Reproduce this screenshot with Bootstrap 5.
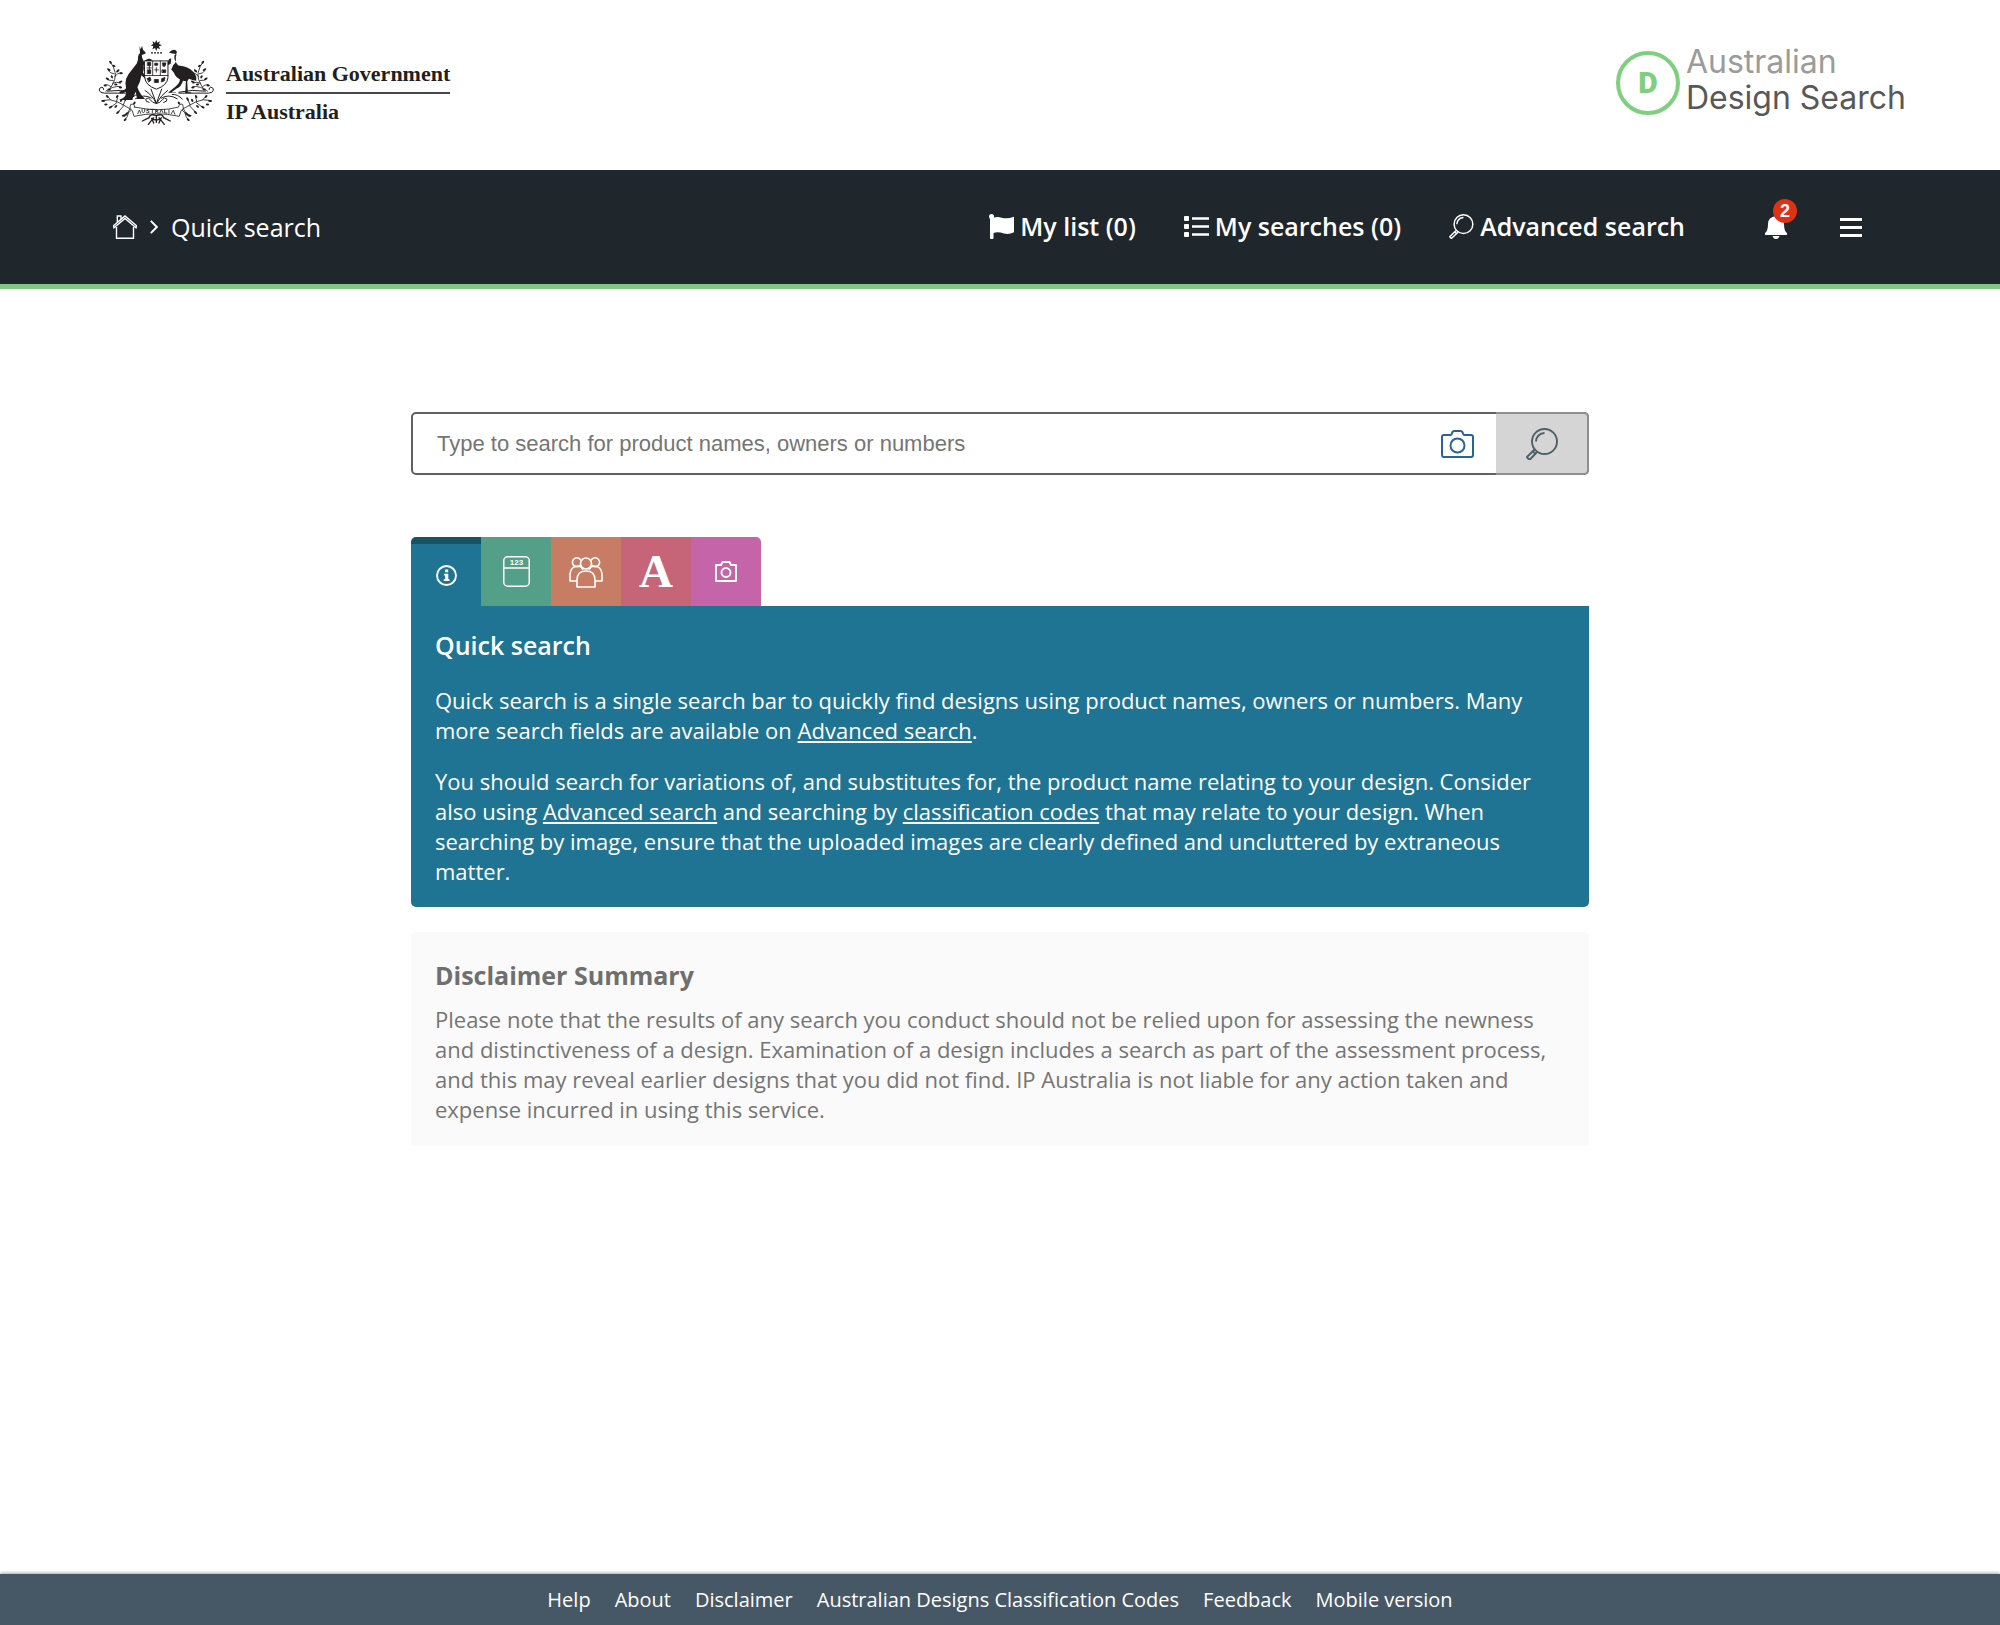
<!DOCTYPE html>
<html lang="en">
<head>
<meta charset="utf-8">
<meta name="viewport" content="width=device-width, initial-scale=1">
<title>Australian Design Search - Quick search</title>
<link href="https://cdn.jsdelivr.net/npm/bootstrap@5.3.0/dist/css/bootstrap.min.css" rel="stylesheet">
<style>
body{font-family:"Open Sans","Noto Sans",sans-serif;font-size:22px;line-height:30px;color:#fff;background:#fff}
svg{display:block;flex:none}
.site-head{height:170px;padding:0 94px 5px 97px}
.gov-brand{gap:9px;color:#231f20;font:bold 22px/36px "Liberation Serif",serif}
.gov-names{padding-top:20px}
.gov-brand .gov-top{border-bottom:2px solid #4a4648}
.ads-brand{gap:6px;font:400 32px/36px Inter,sans-serif;color:#585858}
.ads-names{padding-bottom:5px}
.ads-brand .ads-top{color:#9b9b9b}
.ads-ring{width:64px;height:64px;border:4px solid #7ed07e;color:#7ed07e;font:900 30px/30px Roboto,sans-serif}
.main-nav{height:119px;background:#1f262c;border-bottom:5px solid #81c784;padding:0 138px 0 113px;font-size:25px;line-height:34px}
.main-nav a,.main-nav button{color:#fff;text-decoration:none}
.crumbs{gap:13px}
.nav-links{gap:48px;font-weight:600;padding-bottom:2px}
.nav-links a{gap:6px}
.nav-tools{gap:53px;margin-left:80px}
.alert-count{width:24px;height:24px;left:8px;top:-17px;background:#dd3214;font:bold 18px/24px "Liberation Sans",sans-serif}
.search-wrap{max-width:1178px;padding-top:123px}
.search-box{height:63px;border:2px solid #5f6264;border-radius:5px;margin-bottom:62px}
.search-box input{border:0;background:none;padding:0 24px;font:22px/30px "Liberation Sans",sans-serif;color:#333}
.search-box input::placeholder{color:#757575;opacity:1}
.cam-btn{padding:0 24px}
.go-btn{width:93px;margin:-2px;background:#d5d5d5;border:2px solid #8d8f90;border-left:0;border-radius:0 5px 5px 0}
.search-tabs{height:69px}
.search-tabs button{width:70px;border:0;padding:0;color:#fff}
.search-tabs button:first-child{border-top:7px solid #1a5265;border-radius:5px 0 0 0;background:#1f7393}
.search-tabs button:last-child{border-radius:0 5px 0 0}
.tab-number{background:#549f88}
.tab-owner{background:#c67d64}
.tab-text{background:#c66478;font:bold 47px/47px "Liberation Serif",serif}
.tab-image{background:#c664aa}
.info-panel{background:#1f7393;border-radius:0 0 5px 5px;padding:22px 24px 21px}
.info-panel a{color:#fff}
.info-panel h1{font-size:25px;line-height:34px;font-weight:600;margin-bottom:23px}
.info-panel p{margin-bottom:21px}
.disclaimer{background:#fafafa;color:#757575;border-radius:5px;margin-top:25px;padding:26px 24px 22px}
.disclaimer h2{font-size:25px;line-height:34px;font-weight:700;margin-bottom:12px;color:#6f6f6f}
.site-foot{height:51px;background:#465866;box-shadow:0 -1px 3px rgba(0,0,0,.35);gap:24px;font-size:20px;line-height:27px}
.site-foot a{color:#fff;text-decoration:none}
</style>
</head>
<body class="d-flex flex-column min-vh-100">
<header class="site-head d-flex justify-content-between align-items-center">
  <div class="gov-brand d-flex align-items-center">
    <svg width="120" height="88" viewBox="20 25 360 265" fill="none" stroke="#231f20" stroke-width="2.5" stroke-linecap="round" role="img" aria-label="Commonwealth coat of arms">
      <defs>
        <g id="wattle">
          <path d="M60 172q18-26 14-46t-15-32M71 130q-10 0-18-10M72 138q10-12 20-12M68 150q-14 2-20-6M60 168q-14-10-18-4M66 158q14-6 24 0M46 182q20-16 44-14"/>
          <path d="M36 210q24-6 44 4t44 24M60 208l-10-12M78 214l4-16M80 216l-18 14M98 224l8-18M100 226l-18 20M118 236l-8 14M120 234l12-16M100 254q14-4 22-14M104 268q8-8 10-20"/>
          <g fill="#231f20" stroke="none">
            <ellipse cx="60" cy="95" rx="5" ry="3" transform="rotate(50 60 95)"/><ellipse cx="70" cy="106" rx="5" ry="3" transform="rotate(20 70 106)"/><ellipse cx="55" cy="117" rx="6" ry="3" transform="rotate(30 55 117)"/><ellipse cx="82" cy="121" rx="6" ry="3" transform="rotate(-40 82 121)"/><ellipse cx="92" cy="128" rx="5" ry="3"/><ellipse cx="51" cy="145" rx="6" ry="3" transform="rotate(30 51 145)"/><ellipse cx="64" cy="139" rx="5" ry="3" transform="rotate(60 64 139)"/><ellipse cx="90" cy="154" rx="6" ry="3" transform="rotate(-20 90 154)"/><ellipse cx="44" cy="165" rx="5" ry="3"/><ellipse cx="76" cy="162" rx="5" ry="3"/><ellipse cx="90" cy="171" rx="5" ry="3"/><ellipse cx="56" cy="177" rx="5" ry="3"/>
            <ellipse cx="38" cy="212" rx="6" ry="3"/><ellipse cx="50" cy="198" rx="5" ry="3" transform="rotate(50 50 198)"/><ellipse cx="80" cy="198" rx="5" ry="3" transform="rotate(-60 80 198)"/><ellipse cx="60" cy="230" rx="6" ry="3" transform="rotate(-30 60 230)"/><ellipse cx="46" cy="222" rx="5" ry="3"/><ellipse cx="106" cy="206" rx="6" ry="3" transform="rotate(-60 106 206)"/><ellipse cx="82" cy="246" rx="6" ry="3" transform="rotate(-40 82 246)"/><ellipse cx="76" cy="228" rx="5" ry="3" transform="rotate(-40 76 228)"/><ellipse cx="92" cy="210" rx="5" ry="3" transform="rotate(-60 92 210)"/><ellipse cx="108" cy="251" rx="6" ry="3" transform="rotate(-50 108 251)"/><ellipse cx="100" cy="256" rx="6" ry="3"/><ellipse cx="104" cy="268" rx="5" ry="3" transform="rotate(-40 104 268)"/><ellipse cx="132" cy="218" rx="5" ry="3" transform="rotate(-60 132 218)"/>
          </g>
        </g>
      </defs>
      <use href="#wattle"/>
      <use href="#wattle" transform="matrix(-1 0 0 1 398 0)"/>
      <path fill="#231f20" stroke="none" d="M198 28l3 8 8-4-3 8 9 4-9 3 3 9-8-4-3 9-4-9-8 4 3-9-8-3 8-4-3-8 8 4z"/>
      <path d="M182 67h34" stroke-width="4" stroke-dasharray="6 3" stroke-linecap="butt"/>
      <path fill="#231f20" stroke="none" d="M147 46l4 10 4-11 3 13q9 6 8 11-6 3-12 4 0 9 7 21l10 1-2 10-9-2q2 14-2 23l10 16-2 4-13-12-4 18-8 18q8 22 22 34v2h-23l-4-22-10 22 1 3H84q20-6 23-20 1-16-2-30 0-15 9-28l25-32q5-10 4-20 0-8 6-12z"/>
      <path d="M90 186q16-2 24-16" stroke-width="7"/>
      <path fill="#231f20" stroke="none" d="M236 66q8-9 15-9 8 0 9 8-1 6-7 8-3 8 2 18 6 12 10 14 30 3 43 18 14 14 10 28-12-1-22-6l-5 8 2 32h10v3h-18l2-36-9-1q-4 18-20 24l-14 10h13v2h-24l24-20q12-10 12-20-14-8-18-20l-8-10 6-14q8-4 8-14-2-10 2-17-6-3-13-3z"/>
      <path fill="#fff" stroke-width="3" d="M163 91h70v50q-2 24-35 35-33-11-35-35z"/>
      <path d="M163 135h70M187 91v44M210 91v44M170 112h13M177 97v32" stroke-width="2.5"/>
      <path fill="#231f20" d="M172 96h9v9h-9zM172 118h9v11h-9zM194 98h8v6h-8zM198 111v14M193 118h11M217 97h10l-3 10h-5zM216 118h10v8h-10zM171 144l8-4 3 9-6 5zM193 147h11v9h-11zM215 144l9-3-2 10-8 3z"/>
      <path fill="#231f20" stroke="none" d="M163 91q12-12 22-3l-2 3zM233 91q3-7 10-8l-2 17-8 3z"/>
      <path d="M130 188H42q-14 0-16-9 0-8 8-9 6 1 5 7M266 188h88q14 0 16-9 0-8-8-9-6 1-5 7M50 182q40-6 80 3M346 182q-40-6-80 3" stroke-width="3"/>
      <path d="M164 180q20 12 34 39 16-27 34-39M182 176l16 43 16-43M176 216q-12-2-10-10 8-8 14 2 6 10 18 11 12-1 18-11 6-10 14-2 2 8-10 10M135 205q26-16 48-2M261 205q-26-16-48-2M120 206q14-16 30-14M276 206q-14-16-30-14" stroke-width="3"/>
      <path fill="#fff" d="M133 230q-2-12-12-8-6 14 4 18l6 18q66-16 136 0l6-18q10-4 4-18-10-4-12 8-60 16-132 0z"/>
      <path d="M142 250l5-11 4 10M155 237v7q4 5 8 0v-8M176 237q-8-2-7 3 8 0 7 6-6 3-8 0M181 237h11M186 237v10M196 247v-10q9 0 7 5h-6l7 5M209 247l4-10 5 10M223 237v11h7M236 238v11M243 250l6-10 5 12" stroke-width="2.5"/>
      <path d="M198 256q-18-8-22 6l-20 10M198 256q18-8 22 6l20 10M190 262l-16 20M206 262l16 20M198 256v20M184 264q14 10 28 0l-6 14M184 264l6 14" stroke-width="4"/>
    </svg>
    <div class="gov-names"><div class="gov-top">Australian Government</div><div>IP Australia</div></div>
  </div>
  <div class="ads-brand d-flex align-items-center">
    <div class="ads-ring rounded-circle d-flex align-items-center justify-content-center">D</div>
    <div class="ads-names"><div class="ads-top">Australian</div><div>Design Search</div></div>
  </div>
</header>
<nav class="main-nav d-flex justify-content-between align-items-center">
  <div class="crumbs d-flex align-items-center">
    <a href="#" aria-label="Home"><svg width="24" height="24" viewBox="0 0 24 24" fill="none" stroke="#fff" stroke-width="1.4"><path d="M3.500 12v11.300h17V12M1 12.800L12 3.500l11 9.300.6-2L12 1 8 4.400V1H4.300v6.500L.5 10.800zM4.300 7.500L8 4.400"/></svg></a>
    <svg width="8" height="14" viewBox="0 0 8 14" fill="none" stroke="#fff" stroke-width="1.900"><path d="M.8.800L6.800 7l-6 6.200"/></svg>
    <span>Quick search</span>
  </div>
  <div class="d-flex align-items-center">
    <div class="nav-links d-flex">
      <a href="#" class="d-flex align-items-center"><svg width="25" height="25" viewBox="0 0 25 25" fill="#fff"><circle cx="2.500" cy="2.500" r="2.500"/><path d="M1 2h3.500v1.700q4-1.300 8 0 6 1.600 12.500-1v15.500q-5 2.600-10 1.300-6-2-10.500-.6v5.600q-1.800 1.300-3.500 0z"/></svg>My list (0)</a>
      <a href="#" class="d-flex align-items-center"><svg width="25" height="21" viewBox="0 0 25 21" fill="#fff"><rect width="5" height="5" rx="1"/><rect y="8" width="5" height="5" rx="1"/><rect y="16" width="5" height="5" rx="1"/><path d="M8 1.200h17v2.600H8zM8 9.200h17v2.600H8zM8 17.200h17v2.600H8z"/></svg>My searches (0)</a>
      <a href="#" class="d-flex align-items-center"><svg width="25" height="25" viewBox="0 0 32 32" fill="none" stroke="#fff" stroke-width="1.900"><circle cx="18.500" cy="13" r="12"/><path d="M10 13a8.500 8.500 0 0 1 8.500-8.500M9 21l-8 8 2 2.300 8.500-8M7.500 23l2 2"/></svg>Advanced search</a>
    </div>
    <div class="nav-tools d-flex align-items-center">
      <button class="btn p-0 border-0 position-relative" aria-label="Notifications"><svg width="22" height="23" viewBox="0 0 22 23" fill="#fff"><path d="M11 0q8 1 8 8 0 7 3 9v2H0v-2q3-2 3-9 0-7 8-8zM7.500 20h7q-1 3-3.500 3t-3.500-3z"/></svg><span class="alert-count position-absolute rounded-circle">2</span></button>
      <button class="btn p-0 border-0" aria-label="Menu"><svg width="22" height="19" fill="#fff"><path d="M0 0h22v3H0zM0 8h22v3H0zM0 16h22v3H0z"/></svg></button>
    </div>
  </div>
</nav>
<main class="search-wrap w-100 mx-auto flex-grow-1">
  <form class="search-box d-flex align-items-stretch">
    <input class="flex-grow-1" type="text" aria-label="Quick search" placeholder="Type to search for product names, owners or numbers">
    <button type="button" class="cam-btn btn border-0 py-0" aria-label="Search by image"><svg width="33" height="28" viewBox="0 0 33 28" fill="none" stroke="#2a6496" stroke-width="2"><path d="M3 5h6.500q1 0 1.300-1.200Q11.300 1 13.500 1h6q2 0 2.600 2.800Q22.400 5 23.500 5H30q2 0 2 2v18q0 2-2 2H3q-2 0-2-2V7q0-2 2-2z"/><circle cx="16.500" cy="15.500" r="7"/></svg></button>
    <button type="button" class="go-btn d-flex align-items-center justify-content-center" aria-label="Search"><svg width="32" height="32" viewBox="0 0 32 32" fill="none" stroke="#4d6066" stroke-width="1.900"><circle cx="18.500" cy="13.500" r="12.500"/><path d="M10 13.500A8.500 8.500 0 0 1 18.500 5M8.500 21.500l-7.500 7.500q1 2.300 3 2.500l7.500-8M7 23.500l2.500 2.500" stroke-linejoin="round"/></svg></button>
  </form>
  <div class="search-tabs d-flex" role="tablist">
    <button role="tab" aria-label="About quick search" class="d-flex align-items-center justify-content-center"><svg width="21" height="21" viewBox="0 0 21 21"><circle cx="10.500" cy="10.500" r="9.500" fill="none" stroke="#fff" stroke-width="1.900"/><path fill="#fff" d="M9 4.500h3.200v2.700H9zM8 8.800h4.300v5.400h1.200v1.800H7.700v-1.800H9v-3.600H8z"/></svg></button>
    <button role="tab" aria-label="Numbers" class="tab-number d-flex align-items-center justify-content-center"><svg width="27" height="31" viewBox="0 0 27 31"><rect x=".75" y=".75" width="25.500" height="29.500" rx="4" fill="none" stroke="#fff" stroke-width="1.500"/><path stroke="#fff" stroke-width="1.500" d="M1 12h25"/><text x="13.500" y="9" text-anchor="middle" fill="#fff" font-family="Liberation Sans" font-weight="bold" font-size="8">123</text></svg></button>
    <button role="tab" aria-label="Owners" class="tab-owner d-flex align-items-center justify-content-center"><svg width="34" height="32" viewBox="0 0 34 32" fill="none" stroke="#fff" stroke-width="1.600"><circle cx="17" cy="7.500" r="5.500"/><path d="M12 4.500A4.500 4.500 0 1 0 11.500 9M22 4.500A4.500 4.500 0 1 1 22.500 9M8 31V24q0-9 9-9t9 9v7zM8 25H1v-7q1-8 8-8 3 0 5 3.500M26 25h7v-7q-1-8-8-8-3 0-5 3.500" stroke-linejoin="round"/></svg></button>
    <button role="tab" aria-label="Words" class="tab-text d-flex align-items-center justify-content-center">A</button>
    <button role="tab" aria-label="Images" class="tab-image d-flex align-items-center justify-content-center"><svg width="22" height="21" viewBox="0 0 22 21" fill="none" stroke="#fff" stroke-width="1.900"><path d="M1 4h5l1.500-3h7L16 4h5v16H1z" stroke-linejoin="round"/><circle cx="11" cy="11.500" r="4.500"/></svg></button>
  </div>
  <section class="info-panel">
    <h1>Quick search</h1>
    <p>Quick search is a single search bar to quickly find designs using product names, owners or numbers. Many more search fields are available on <a href="#">Advanced search</a>.</p>
    <p class="mb-0">You should search for variations of, and substitutes for, the product name relating to your design. Consider also using <a href="#">Advanced search</a> and searching by <a href="#">classification codes</a> that may relate to your design. When searching by image, ensure that the uploaded images are clearly defined and uncluttered by extraneous matter.</p>
  </section>
  <section class="disclaimer">
    <h2>Disclaimer Summary</h2>
    <p class="mb-0">Please note that the results of any search you conduct should not be relied upon for assessing the newness and distinctiveness of a design. Examination of a design includes a search as part of the assessment process, and this may reveal earlier designs that you did not find. IP Australia is not liable for any action taken and expense incurred in using this service.</p>
  </section>
</main>
<footer class="site-foot d-flex align-items-center justify-content-center">
  <a href="#">Help</a><a href="#">About</a><a href="#">Disclaimer</a><a href="#">Australian Designs Classification Codes</a><a href="#">Feedback</a><a href="#">Mobile version</a>
</footer>
<script src="https://cdn.jsdelivr.net/npm/bootstrap@5.3.0/dist/js/bootstrap.bundle.min.js"></script>
</body>
</html>
